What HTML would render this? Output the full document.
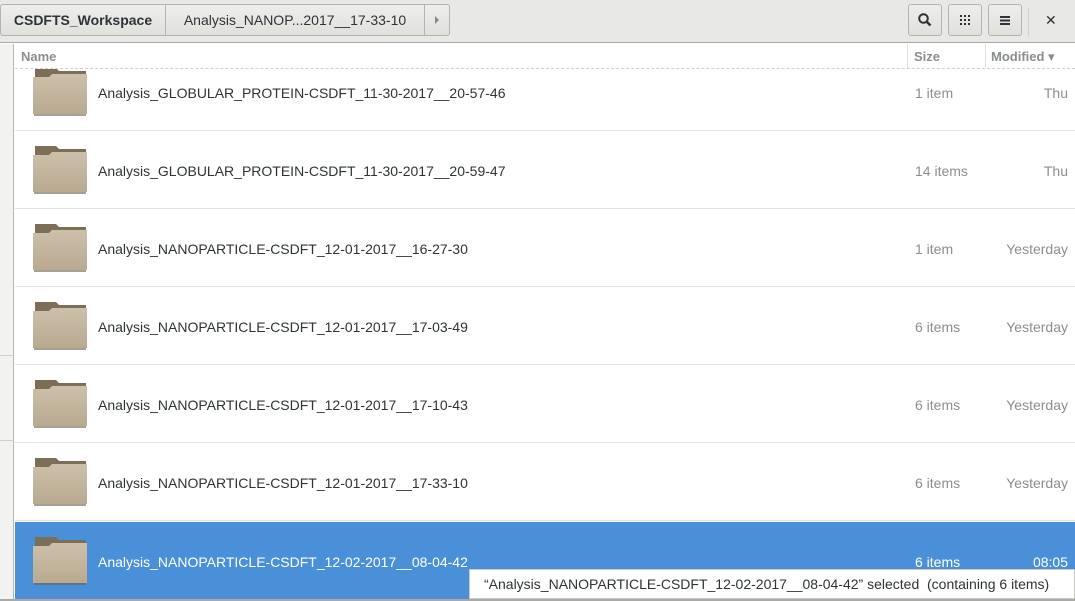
<!DOCTYPE html>
<html><head><meta charset="utf-8"><style>
*{margin:0;padding:0;box-sizing:border-box}
body{width:1075px;height:601px;overflow:hidden;background:#fff;font-family:"Liberation Sans","DejaVu Sans",sans-serif;font-size:14px;color:#2e3436;position:relative}
.hb{position:absolute;left:0;top:0;width:1075px;height:43px;background:#e8e8e7;border-bottom:1px solid #a9a9a6}
.btn{position:absolute;top:4px;height:32px;border:1px solid #b3b3b0;border-radius:3px;background:linear-gradient(#eeeeec,#e0e0dd);display:flex;align-items:center;justify-content:center}
.side{position:absolute;left:0;top:44px;width:14px;height:557px;background:#f2f2f1;border-right:1px solid #b6b6b3}
.list{position:absolute;left:15px;top:44px;width:1060px;height:557px;overflow:hidden}
.colh{position:absolute;left:0;top:0;width:1060px;height:25px;background:#fff;color:#8a8e8f;font-weight:bold;font-size:13px;z-index:2;border-bottom:1px dashed #d0d0d0}
.colh span{position:absolute;top:5px}
.row{position:absolute;left:0;width:1060px;height:78px;border-bottom:1px solid #e3e3e1}
.row .n{position:absolute;left:83px;top:32px}
.row .s{position:absolute;left:900px;top:32px;color:#8b8e8f}
.row .m{position:absolute;right:7px;top:32px;color:#8b8e8f}
.row svg{position:absolute;left:18px;top:14px}
.sel{background:#4a90d9;color:#fff}
.sel .s,.sel .m{color:#fff}
</style></head><body>
<div class="hb">
<div class="btn" style="left:0;width:166px;border-radius:3px 0 0 3px;font-weight:bold;color:#2e3436">CSDFTS_Workspace</div>
<div class="btn" style="left:165px;width:260px;border-radius:0;color:#2e3436">Analysis_NANOP...2017__17-33-10</div>
<div class="btn" style="left:424px;width:26px;border-radius:0 3px 3px 0"><svg width="8" height="10"><path d="M2 1 L6 5 L2 9Z" fill="#888"/></svg></div>
<div class="btn" style="left:908px;width:34px"><svg width="16" height="16"><circle cx="6.5" cy="6.5" r="4.3" fill="none" stroke="#2e3436" stroke-width="2"/><path d="M9.5 9.5 L13.5 13.5" stroke="#2e3436" stroke-width="2.5"/></svg></div>
<div class="btn" style="left:948px;width:34px"><svg width="12" height="12" fill="#2e3436"><rect x="1" y="1" width="2" height="2"/><rect x="5" y="1" width="2" height="2"/><rect x="9" y="1" width="2" height="2"/><rect x="1" y="5" width="2" height="2"/><rect x="5" y="5" width="2" height="2"/><rect x="9" y="5" width="2" height="2"/><rect x="1" y="9" width="2" height="2"/><rect x="5" y="9" width="2" height="2"/><rect x="9" y="9" width="2" height="2"/></svg></div>
<div class="btn" style="left:988px;width:34px"><svg width="12" height="12" fill="#2e3436"><rect x="1" y="2" width="10" height="2"/><rect x="1" y="5.5" width="10" height="2"/><rect x="1" y="9" width="10" height="2"/></svg></div>
<div style="position:absolute;left:1028px;top:8px;width:1px;height:28px;background:#d0d0ce"></div>
<div style="position:absolute;left:1045px;top:12px;font-weight:bold;font-size:14px">✕</div>
</div>
<div class="side"><div style="position:absolute;top:311px;left:0;width:14px;height:1px;background:#d0d0ce"></div><div style="position:absolute;top:396px;left:0;width:14px;height:1px;background:#d0d0ce"></div></div>
<div class="list">
<div class="colh"><span style="left:6px">Name</span><span style="left:899px">Size</span><span style="left:976px">Modified ▾</span>
<div style="position:absolute;left:892px;top:0;width:1px;height:24px;background:#e0e0e0"></div><div style="position:absolute;left:970px;top:0;width:1px;height:24px;background:#e0e0e0"></div></div>
<svg width="0" height="0" style="position:absolute"><defs><linearGradient id="g" x1="0" y1="0" x2="0" y2="1"><stop offset="0" stop-color="#cdc0ab"/><stop offset="1" stop-color="#b9a98f"/></linearGradient>
<symbol id="f" viewBox="0 0 56 50"><path d="M2 1 H23 L26 4 H53 V40 H2Z" fill="#7d6e58"/><path d="M0 10 H16 L19 7 H54 V47 H0Z" fill="url(#g)"/><rect x="1" y="47" width="52" height="2" fill="#6b6152" opacity=".6"/></symbol></defs></svg>
<div class="row" style="top:9px"><svg width="56" height="50"><use href="#f"/></svg><span class="n">Analysis_GLOBULAR_PROTEIN-CSDFT_11-30-2017__20-57-46</span><span class="s">1 item</span><span class="m">Thu</span></div>
<div class="row" style="top:87px"><svg width="56" height="50"><use href="#f"/></svg><span class="n">Analysis_GLOBULAR_PROTEIN-CSDFT_11-30-2017__20-59-47</span><span class="s">14 items</span><span class="m">Thu</span></div>
<div class="row" style="top:165px"><svg width="56" height="50"><use href="#f"/></svg><span class="n">Analysis_NANOPARTICLE-CSDFT_12-01-2017__16-27-30</span><span class="s">1 item</span><span class="m">Yesterday</span></div>
<div class="row" style="top:243px"><svg width="56" height="50"><use href="#f"/></svg><span class="n">Analysis_NANOPARTICLE-CSDFT_12-01-2017__17-03-49</span><span class="s">6 items</span><span class="m">Yesterday</span></div>
<div class="row" style="top:321px"><svg width="56" height="50"><use href="#f"/></svg><span class="n">Analysis_NANOPARTICLE-CSDFT_12-01-2017__17-10-43</span><span class="s">6 items</span><span class="m">Yesterday</span></div>
<div class="row" style="top:399px"><svg width="56" height="50"><use href="#f"/></svg><span class="n">Analysis_NANOPARTICLE-CSDFT_12-01-2017__17-33-10</span><span class="s">6 items</span><span class="m">Yesterday</span></div>
<div class="row sel" style="top:478px"><svg width="56" height="50"><use href="#f"/></svg><span class="n">Analysis_NANOPARTICLE-CSDFT_12-02-2017__08-04-42</span><span class="s">6 items</span><span class="m">08:05</span></div>
</div>
<div style="position:absolute;left:469px;top:569px;width:606px;height:30px;background:#fff;border:1px solid #c8c8c5;padding:6px 0 0 14px;color:#2e3436">“Analysis_NANOPARTICLE-CSDFT_12-02-2017__08-04-42” selected &nbsp;(containing 6 items)</div>
<div style="position:absolute;left:0;top:599px;width:1075px;height:2px;background:#a9a9a6"></div>
</body></html>
